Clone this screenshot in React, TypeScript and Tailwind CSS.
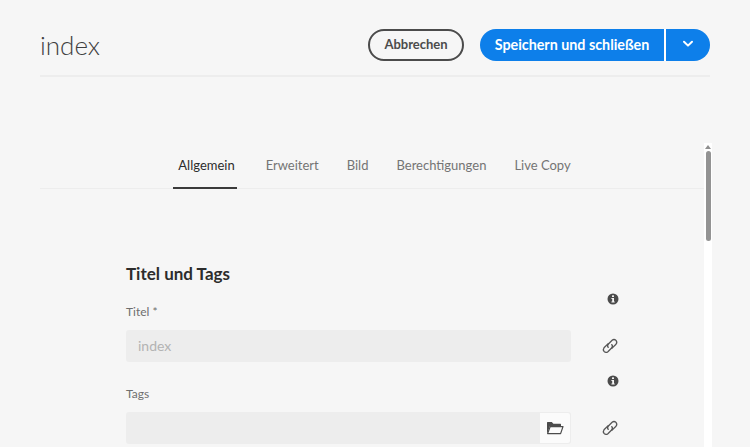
import React from "react";

function LinkIcon() {
  return (
    <svg width="18" height="18" viewBox="0 0 18 18" fill="none" stroke="#555555" strokeWidth="1.3" strokeLinecap="round">
      <path d="M7.2 6.6 L3 10.8 a3 3 0 0 0 0 3.6 a3 3 0 0 0 3.9 .3 L10.6 11 a2.6 2.6 0 0 0 .2 -3.4" />
      <path d="M10.8 11.4 L15 7.2 a3 3 0 0 0 0 -3.8 a3 3 0 0 0 -3.9 -.2 L7.4 7 a2.6 2.6 0 0 0 -.2 3.4" />
    </svg>
  );
}

function InfoIcon() {
  return (
    <svg width="12" height="12" viewBox="0 0 12 12">
      <circle cx="6" cy="6" r="5.5" fill="#4b4b4b" />
      <rect x="5" y="2.2" width="2" height="1.8" rx="0.6" fill="#f6f6f6" />
      <path d="M4.4 5h2.6v3.6h.7v1H4.4v-1h.8V6h-.8z" fill="#f6f6f6" />
    </svg>
  );
}

function FolderIcon() {
  return (
    <svg width="18" height="14" viewBox="0 0 18 14" fill="none">
      <path d="M1 13V1.6c0-.3.2-.6.6-.6h4.2l1.6 1.8h7c.4 0 .6.2.6.6V5H4L1 13z" fill="#4b4b4b" />
      <path d="M4.2 5.6h12.8L14.6 12.6H1.6z" stroke="#4b4b4b" strokeWidth="1.2" strokeLinejoin="round" />
    </svg>
  );
}

function Field({ label, value, folder }: { label: string; value?: string; folder?: boolean }) {
  return (
    <div className="flex flex-col">
      <div className="flex h-[27px] w-[500px] items-start pt-[1px]">
        <span className="text-[12px] leading-[16px] text-[#6e6e6e]">{label}</span>
        <span className="ml-auto mt-[-11px] flex w-[12px] translate-x-[-7px]">
          <InfoIcon />
        </span>
      </div>
      <div className="flex items-center">
        <div className="flex h-[32px] w-[445px] items-center justify-between rounded-[3px] bg-[#ededed] pl-[12px]">
          <span className="pb-[2px] text-[14px] text-[#b3b3b3]">{value}</span>
          {folder && (
            <span className="flex h-[32px] w-[32px] items-center justify-center rounded-r-[3px] border border-[#ededed] bg-[#fbfbfb]">
              <FolderIcon />
            </span>
          )}
        </div>
        <span className="ml-[30px] flex">
          <LinkIcon />
        </span>
      </div>
    </div>
  );
}

export default function App() {
  const tabs = ["Erweitert", "Bild", "Berechtigungen", "Live Copy"];
  return (
    <div
      className="flex h-[447px] w-[750px] flex-col overflow-hidden bg-[#f6f6f6] pl-[40px] pr-[38px]"
      style={{ fontFamily: '"Lato", "Open Sans", sans-serif' }}
    >
      <header className="mr-[2px] flex h-[77px] shrink-0 items-center justify-between border-b-2 border-[#ededed] pt-[14px]">
        <h1 className="text-[26px] font-light leading-none text-[#3f3f3f]">index</h1>
        <div className="flex items-center">
          <button className="h-[32px] w-[96px] rounded-full border-2 border-[#4b4b4b] text-[13px] font-bold text-[#4b4b4b]">
            Abbrechen
          </button>
          <div className="ml-[16px] flex h-[32px] w-[230px] overflow-hidden rounded-full bg-[#0d7fea] text-white">
            <span className="flex w-[184px] items-center justify-center text-[14.3px] font-bold">Speichern und schließen</span>
            <span className="w-[2px] bg-white" />
            <span className="flex flex-1 items-center justify-center pb-[2px]">
              <svg width="12" height="8" viewBox="0 0 12 8" fill="none" stroke="white" strokeWidth="2" strokeLinecap="round" strokeLinejoin="round">
                <path d="M2 1.8 6 5.6 10 1.8" />
              </svg>
            </span>
          </div>
        </div>
      </header>

      <div className="flex min-h-0 flex-1 pt-[66px]">
        <main className="min-w-0 flex-1 overflow-hidden">
          <nav className="flex h-[46px] items-center justify-center gap-[28px] border-b border-[#ededed] pl-[5px] text-[13px] text-[#747474]">
            <span className="relative mr-[3px] text-[#2c2c2c]">
              Allgemein
              <span className="absolute bottom-[-14px] left-[-5px] right-[-2px] h-[2px] bg-[#3a3a3a]" />
            </span>
            {tabs.map((t) => (
              <span key={t}>{t}</span>
            ))}
          </nav>
          <section className="pl-[86px] pt-[75px]">
            <h2 className="mb-[19px] text-[17px] font-bold leading-[20px] text-[#2c2c2c]">Titel und Tags</h2>
            <div className="flex flex-col gap-[23px]">
              <Field label="Titel *" value="index" />
              <Field label="Tags" folder />
            </div>
          </section>
        </main>
        <div className="flex w-[8px] shrink-0 flex-col items-center bg-white">
          <svg className="mt-[2px]" width="6" height="4" viewBox="0 0 6 4">
            <path d="M3 0 6 4H0z" fill="#8e8e8e" />
          </svg>
          <span className="mt-[2px] h-[90px] w-[5px] rounded-full bg-[#939393]" />
        </div>
      </div>
    </div>
  );
}
